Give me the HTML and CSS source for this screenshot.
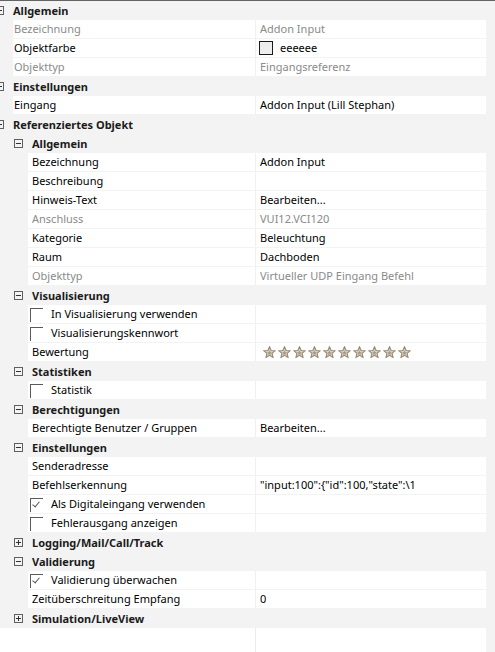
FILE: index.html
```html
<!DOCTYPE html>
<html lang="de">
<head>
  <meta charset="UTF-8" />
  <title>Eigenschaften</title>
  <link rel="stylesheet" href="styles.css">
</head>
<body>

<svg width="0" height="0" class="defs">
  <defs>
    <symbol id="star" viewBox="0 0 13 13">
      <polygon points="6.5,0.6 8.1,4.5 12.3,4.7 9.1,7.4 10.1,11.6 6.5,9.3 2.9,11.6 3.9,7.4 0.7,4.7 4.9,4.5"
               fill="#d9d2c4" stroke="#968b76" stroke-width="1.1" stroke-linejoin="round"/>
      <polygon points="6.5,4.2 7.2,5.9 9,6 7.6,7.1 8.1,8.9 6.5,7.9 4.9,8.9 5.4,7.1 4,6 5.8,5.9" fill="#a79c88"/>
    </symbol>
  </defs>
</svg>

<div class="page">
  <div class="main">
    <div class="grid">

      <!-- Allgemein -->
      <div class="cat lvl0"><span class="exp"></span><span class="cat-name">Allgemein</span></div>
      <div class="prop lvl0"><div class="name dim">Bezeichnung</div><div class="value dim">Addon Input</div></div>
      <div class="prop lvl0"><div class="name">Objektfarbe</div><div class="value"><span class="swatch"></span>eeeeee</div></div>
      <div class="prop lvl0"><div class="name dim">Objekttyp</div><div class="value dim">Eingangsreferenz</div></div>

      <!-- Einstellungen -->
      <div class="cat lvl0"><span class="exp"></span><span class="cat-name">Einstellungen</span></div>
      <div class="prop lvl0"><div class="name">Eingang</div><div class="value">Addon Input (Lill Stephan)</div></div>

      <!-- Referenziertes Objekt -->
      <div class="cat lvl0"><span class="exp"></span><span class="cat-name">Referenziertes Objekt</span></div>

      <div class="cat lvl1"><span class="exp"></span><span class="cat-name">Allgemein</span></div>
      <div class="prop lvl1"><div class="name">Bezeichnung</div><div class="value">Addon Input</div></div>
      <div class="prop lvl1"><div class="name">Beschreibung</div><div class="value"></div></div>
      <div class="prop lvl1"><div class="name">Hinweis-Text</div><div class="value">Bearbeiten...</div></div>
      <div class="prop lvl1"><div class="name dim">Anschluss</div><div class="value dim">VUI12.VCI120</div></div>
      <div class="prop lvl1"><div class="name">Kategorie</div><div class="value">Beleuchtung</div></div>
      <div class="prop lvl1"><div class="name">Raum</div><div class="value">Dachboden</div></div>
      <div class="prop lvl1"><div class="name dim">Objekttyp</div><div class="value dim">Virtueller UDP Eingang Befehl</div></div>

      <div class="cat lvl1"><span class="exp"></span><span class="cat-name">Visualisierung</span></div>
      <div class="prop lvl1"><div class="name check"><span class="box"></span>In Visualisierung verwenden</div><div class="value"></div></div>
      <div class="prop lvl1"><div class="name check"><span class="box"></span>Visualisierungskennwort</div><div class="value"></div></div>
      <div class="prop lvl1">
        <div class="name">Bewertung</div>
        <div class="value stars">
          <svg><use href="#star"/></svg><svg><use href="#star"/></svg><svg><use href="#star"/></svg><svg><use href="#star"/></svg><svg><use href="#star"/></svg><svg><use href="#star"/></svg><svg><use href="#star"/></svg><svg><use href="#star"/></svg><svg><use href="#star"/></svg><svg><use href="#star"/></svg>
        </div>
      </div>

      <div class="cat lvl1"><span class="exp"></span><span class="cat-name">Statistiken</span></div>
      <div class="prop lvl1"><div class="name check"><span class="box"></span>Statistik</div><div class="value"></div></div>

      <div class="cat lvl1"><span class="exp"></span><span class="cat-name">Berechtigungen</span></div>
      <div class="prop lvl1"><div class="name">Berechtigte Benutzer / Gruppen</div><div class="value">Bearbeiten...</div></div>

      <div class="cat lvl1"><span class="exp"></span><span class="cat-name">Einstellungen</span></div>
      <div class="prop lvl1"><div class="name">Senderadresse</div><div class="value"></div></div>
      <div class="prop lvl1"><div class="name">Befehlserkennung</div><div class="value">"input:100":{"id":100,"state":\1</div></div>
      <div class="prop lvl1"><div class="name check"><span class="box checked"></span>Als Digitaleingang verwenden</div><div class="value"></div></div>
      <div class="prop lvl1"><div class="name check"><span class="box"></span>Fehlerausgang anzeigen</div><div class="value"></div></div>

      <div class="cat lvl1"><span class="exp closed"></span><span class="cat-name">Logging/Mail/Call/Track</span></div>

      <div class="cat lvl1"><span class="exp"></span><span class="cat-name">Validierung</span></div>
      <div class="prop lvl1"><div class="name check"><span class="box checked"></span>Validierung überwachen</div><div class="value"></div></div>
      <div class="prop lvl1"><div class="name">Zeitüberschreitung Empfang</div><div class="value">0</div></div>

      <div class="cat lvl1"><span class="exp closed"></span><span class="cat-name">Simulation/LiveView</span></div>

    </div>
    <div class="filler"><div class="filler-line"></div></div>
  </div>
  <div class="gutter"></div>
</div>

</body>
</html>
```

FILE: styles.css
```css
body {
  margin: 0;
  font-family: "Segoe UI", "Noto Sans", sans-serif;
  font-size: 11px;
  color: #000;
  background: #f3f3f3;
  overflow: hidden;
}
.defs {
  position: absolute;
}
.page {
  display: flex;
  height: 651px;
  border-top: 1px solid #646464;
}
.main {
  width: 486px;
  display: flex;
  flex-direction: column;
}
.gutter {
  flex: 1;
  background: #f3f3f3;
}
.grid {
  background: #f3f3f3;
}
.filler {
  flex: 1;
  background: #fff;
}
.filler-line {
  margin-left: 255px;
  height: 100%;
  border-left: 1px solid #ececec;
}

/* category rows */
.cat {
  display: flex;
  align-items: center;
  height: 19px;
  font-weight: bold;
  color: #1b1b1b;
}
.cat.lvl0 {
  padding-left: 0;
}
.cat.lvl0 .exp {
  margin-left: -5px;
}
.cat.lvl1 .exp {
  margin-left: 14px;
}
.exp {
  position: relative;
  flex: none;
  width: 7px;
  height: 7px;
  border: 1px solid #5f5f5f;
  margin-right: 9px;
}
.exp::before {
  content: "";
  position: absolute;
  left: 1px;
  top: 3px;
  width: 5px;
  height: 1px;
  background: #333;
}
.exp.closed::after {
  content: "";
  position: absolute;
  left: 3px;
  top: 1px;
  width: 1px;
  height: 5px;
  background: #333;
}

/* property rows */
.prop {
  display: flex;
  height: 18px;
  line-height: 18px;
  margin-bottom: 1px;
  background: #fff;
}
.prop.lvl0 {
  margin-left: 13px;
}
.prop.lvl1 {
  margin-left: 28px;
}
.name {
  flex: 1;
  white-space: nowrap;
  overflow: hidden;
}
.lvl0 .name {
  padding-left: 1px;
}
.lvl1 .name {
  padding-left: 4px;
}
.value {
  width: 226px;
  padding-left: 4px;
  border-left: 1px solid #f0f0f0;
  white-space: nowrap;
  overflow: hidden;
  display: flex;
  align-items: center;
}
.dim {
  color: #8a8a8a;
}

.swatch {
  width: 12px;
  height: 12px;
  border: 1px solid #1a1a1a;
  background: #eeeeee;
  margin-right: 7px;
  margin-left: -1px;
}

/* checkboxes */
.lvl1 .name.check {
  padding-left: 2px;
  display: flex;
  align-items: center;
}
.box {
  position: relative;
  width: 12px;
  height: 13px;
  border-top: 1px solid #5a5a5a;
  border-left: 1px solid #5a5a5a;
  margin-right: 8px;
  margin-top: 2px;
}
.box.checked::after {
  content: "";
  position: absolute;
  left: 3px;
  top: 1px;
  width: 3px;
  height: 6px;
  border-right: 1px solid #555;
  border-bottom: 1px solid #555;
  transform: rotate(40deg);
}

/* rating */
.stars {
  padding-left: 7px;
  width: 223px;
  gap: 2px;
}
.stars svg {
  width: 13px;
  height: 13px;
}
```
